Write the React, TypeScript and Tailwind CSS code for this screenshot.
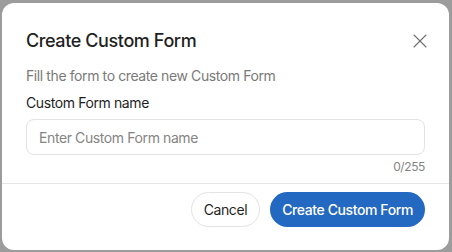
import { X } from "lucide-react";

export default function App() {
  return (
    <div
      className="w-[452px] h-[252px] bg-[#9c9c9c] pt-[3px] px-[2px] overflow-hidden tracking-[-0.025em]"
      style={{ fontFamily: "Inter, 'Noto Sans', sans-serif" }}
    >
      <div className="w-[447px] h-[247px] bg-white rounded-[12px] flex flex-col">
        {/* Header */}
        <div className="flex items-center justify-between pl-[24px] pr-[17px] pt-[24px]">
          <h2 className="text-[18px] leading-[28px] font-medium text-[#1f1f1f]">
            Create Custom Form
          </h2>
          <X className="size-[24px] text-[#707070]" strokeWidth={1.1} />
        </div>

        {/* Body */}
        <div className="px-[24px] pt-[11px] flex flex-col">
          <p className="text-[14px] leading-[20px] text-[#7a7a7a]">
            Fill the form to create new Custom Form
          </p>
          <label className="mt-[7px] text-[14px] leading-[20px] text-[#1f1f1f]">
            Custom Form name
          </label>
          <input
            type="text"
            placeholder="Enter Custom Form name"
            className="mt-[6px] h-[36px] w-full rounded-[8px] border border-[#e3e3e3] px-[12px] text-[14px] text-[#1f1f1f] placeholder:text-[#858585] outline-none"
          />
          <div className="mt-[4px] text-right text-[12px] leading-[16px] text-[#858585]">
            0/255
          </div>
        </div>

        {/* Footer */}
        <div className="mt-[8px] border-t border-[#e6e6e6] flex justify-end gap-[10px] pt-[8px] pr-[24px]">
          <button className="h-[35px] px-[12px] rounded-full border border-[#e3e3e3] text-[14px] text-[#1f1f1f] bg-white">
            Cancel
          </button>
          <button className="h-[35px] px-[12px] rounded-full bg-[#2368c1] text-[14px] font-medium text-white">
            Create Custom Form
          </button>
        </div>
      </div>
    </div>
  );
}
